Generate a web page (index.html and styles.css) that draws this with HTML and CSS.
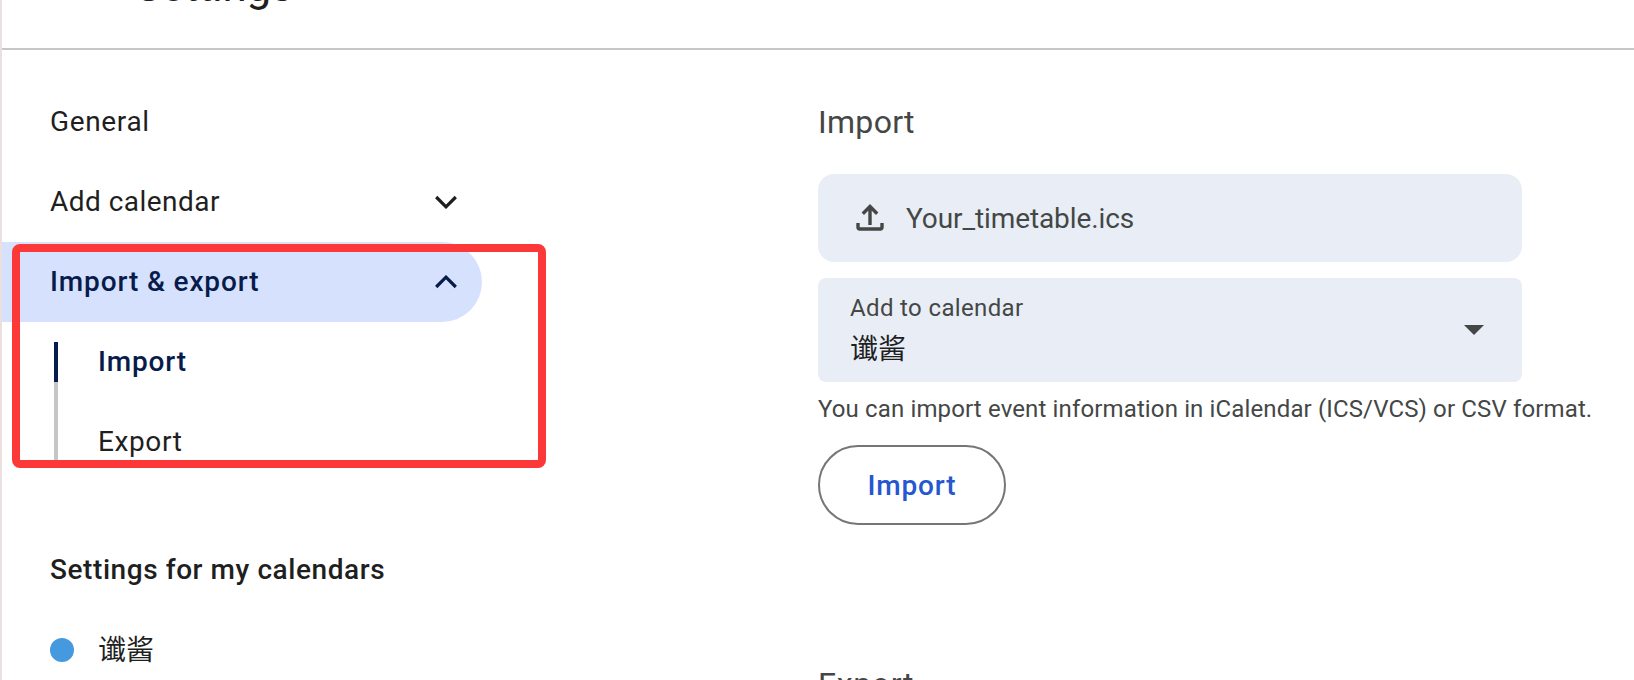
FILE: index.html
```html
<!DOCTYPE html>
<html lang="en">
<head>
<meta charset="utf-8">
<title>Settings</title>
<link rel="stylesheet" href="styles.css">
</head>
<body>
<div class="app">
  <header class="topbar"><h1 class="title">Settings</h1></header>
  <div class="content">
    <nav class="sidebar">
      <a class="item"><span class="t-general">General</span></a>
      <a class="item"><span class="t-add">Add calendar</span>
        <svg class="chevron" viewBox="0 0 24 14"><path d="M2.200 2 12 11.800 21.800 2"/></svg></a>
      <div class="group">
        <a class="item active"><span class="t-ie">Import &amp; export</span>
          <svg class="chevron" viewBox="0 0 24 14"><path d="M2.200 12 12 2.200 21.800 12"/></svg></a>
        <div class="sub">
          <a class="subitem current"><span class="t-import">Import</span></a>
          <a class="subitem"><span class="t-export">Export</span></a>
        </div>
        <div class="highlight"></div>
      </div>
      <h2 class="section"><span class="t-section">Settings for my calendars</span></h2>
      <a class="item calendar"><i class="dot"></i><span class="cjk">谶酱</span></a>
    </nav>
    <main class="panel">
      <h2 class="heading"><span class="t-heading">Import</span></h2>
      <div class="file">
        <svg class="upload" viewBox="0 0 28 28"><path d="M14 21V3.500M6.800 9.700 14 2.500 21.200 9.700M2 19v4.500a1.500 1.500 0 0 0 1.500 1.500h21a1.500 1.500 0 0 0 1.500-1.500V19"/></svg>
        <span class="t-file">Your_timetable.ics</span>
      </div>
      <div class="select">
        <div class="field">
          <span class="label">Add to calendar</span>
          <span class="value cjk">谶酱</span>
        </div>
        <svg class="caret" viewBox="0 0 20 10"><path d="M0 0h20L10 10z"/></svg>
      </div>
      <p class="hint">You can import event information in iCalendar (ICS/VCS) or CSV format.</p>
      <button class="button"><span class="t-button">Import</span></button>
      <h2 class="heading export"><span class="t-heading2">Export</span></h2>
    </main>
  </div>
</div>
</body>
</html>
```
FILE: styles.css
```css
* { box-sizing: border-box; }
body {
  margin: 0;
  width: 1634px;
  height: 680px;
  overflow: hidden;
  background: #fff;
  color: #1f1f1f;
  font-family: Roboto, "Noto Sans CJK SC", sans-serif;
  font-size: 28px;
}
h1, h2, p { margin: 0; font-weight: 400; }
span { white-space: nowrap; }
.app { height: 680px; border-left: 2px solid #ebdfdf; overflow: hidden; }
.topbar {
  height: 50px;
  padding-left: 133px;
  border-bottom: 2px solid #c7c7c7;
  display: flex;
  align-items: flex-start;
}
.title { font-size: 44px; line-height: 52px; margin-top: -40px; letter-spacing: -0.3px; }
.content { display: flex; }
.sidebar { width: 480px; padding-top: 32px; flex: none; }
.item {
  display: flex;
  align-items: center;
  justify-content: space-between;
  width: 480px;
  height: 80px;
  padding: 0 24px 0 48px;
}
.item > span, .subitem > span, .section > span { padding-bottom: 2px; }
.t-general { letter-spacing: 0.65px; }
.t-add { letter-spacing: 0.47px; }
.t-ie { letter-spacing: 0.87px; }
.t-import, .t-button { letter-spacing: 0.85px; }
.t-export { letter-spacing: 0.6px; }
.t-section { letter-spacing: 0.57px; }
.t-heading { letter-spacing: 0.3px; }
.t-heading2 { letter-spacing: 0.6px; }
.t-file { letter-spacing: -0.1px; }
.active {
  background: #d6e2fd;
  color: #081c4c;
  font-weight: 500;
  border-radius: 0 40px 40px 0;
}
.chevron { width: 24px; height: 14px; fill: none; stroke: currentColor; stroke-width: 3.200; }
.group { position: relative; height: 240px; }
.sub { height: 138px; padding-left: 52px; overflow: hidden; }
.subitem { display: flex; align-items: center; height: 80px; padding-left: 44px; position: relative; }
.subitem::before {
  content: "";
  position: absolute;
  left: 0;
  top: 0;
  width: 4px;
  height: 80px;
  background: #c5c7c5;
}
.current { color: #081c4c; font-weight: 500; }
.current::before { top: 20px; height: 40px; background: #081c4c; }
.current::after {
  content: "";
  position: absolute;
  left: 0;
  top: 60px;
  width: 4px;
  height: 20px;
  background: #c5c7c5;
}
.highlight {
  position: absolute;
  left: 10px;
  top: 2px;
  width: 534px;
  height: 224px;
  border: 8px solid #fd3838;
  border-radius: 8px;
}
.section { height: 80px; margin-top: 48px; padding-left: 48px; display: flex; align-items: center; font-size: 28px; font-weight: 500; }
.calendar { justify-content: flex-start; gap: 24px; }
.dot { width: 24px; height: 24px; border-radius: 50%; background: #4599df; }
.cjk { font-family: "Noto Sans CJK SC", sans-serif; font-size: 28px; }
.calendar > .cjk { padding-bottom: 4px; }
.panel { margin-left: 336px; width: 800px; padding-top: 44px; }
.heading { display: flex; align-items: center; height: 56px; font-size: 32px; color: #444746; }
.file {
  display: flex;
  align-items: center;
  gap: 22px;
  width: 704px;
  height: 88px;
  margin-top: 24px;
  padding-left: 38px;
  border-radius: 16px;
  background: #e9eef6;
  color: #444746;
}
.upload { width: 28px; height: 28px; fill: none; stroke: currentColor; stroke-width: 3.400; }
.select {
  display: flex;
  align-items: center;
  justify-content: space-between;
  width: 704px;
  height: 104px;
  margin-top: 16px;
  padding: 0 38px 0 32px;
  border-radius: 8px;
  background: #e9eef6;
}
.field { display: flex; flex-direction: column; padding-bottom: 1px; }
.label { font-size: 24px; line-height: 36px; color: #444746; letter-spacing: 0.36px; }
.value { line-height: 43px; }
.caret { width: 20px; height: 10px; fill: #444746; }
.hint { height: 53px; margin-top: 10px; font-size: 24px; line-height: 34px; color: #444746; letter-spacing: 0.135px; white-space: nowrap; }
.button {
  display: flex;
  align-items: center;
  justify-content: center;
  width: 188px;
  height: 80px;
  padding: 0;
  border: 2px solid #747775;
  border-radius: 40px;
  background: #fff;
  color: #2457d0;
  font: 500 28px Roboto, sans-serif;
}
.export { margin-top: 131px; }
```
